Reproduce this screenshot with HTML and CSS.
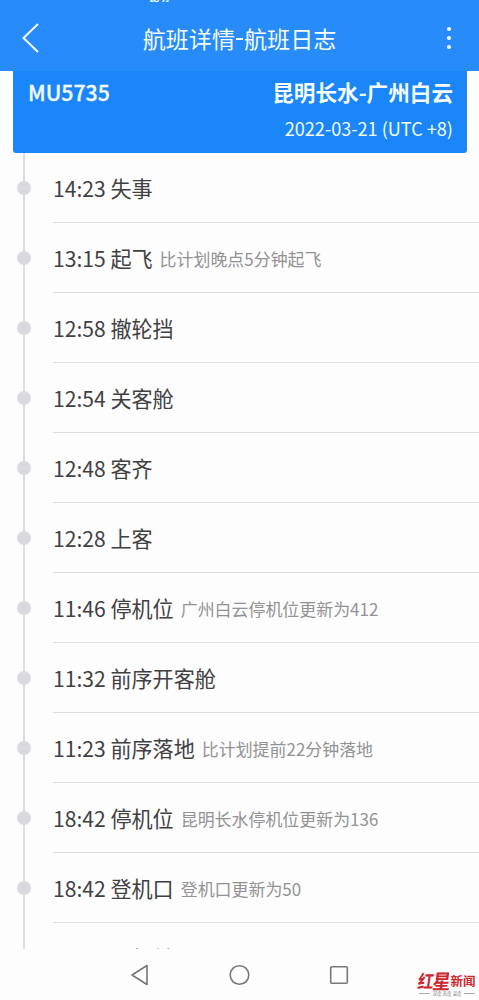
FILE: index.html
```html
<!DOCTYPE html>
<html lang="zh-CN">
<head>
<meta charset="utf-8">
<title>航班详情-航班日志</title>
<link rel="stylesheet" href="styles.css">
</head>
<body>
<div class="screen">
  <header class="bar">
    <span class="status">昆明</span>
    <svg class="back" width="18" height="32" viewBox="0 0 18 32"><path d="M16 2L1.500 16L16 30"/></svg>
    <h1 class="title">航班详情<span class="dash"></span>航班日志</h1>
    <svg class="more" width="6" height="24" viewBox="0 0 6 24"><circle cx="3" cy="3" r="2.100"/><circle cx="3" cy="12" r="2.100"/><circle cx="3" cy="21" r="2.100"/></svg>
  </header>
  <main class="content">
    <section class="flight">
      <div class="route"><span class="number">MU5735</span><span>昆明长水-广州白云</span></div>
      <div class="date">2022-03-21 (UTC +8)</div>
    </section>
    <ol class="log">
      <li><i class="dot"></i><p>14:23 失事</p></li>
      <li><i class="dot"></i><p>13:15 起飞<small>比计划晚点5分钟起飞</small></p></li>
      <li><i class="dot"></i><p>12:58 撤轮挡</p></li>
      <li><i class="dot"></i><p>12:54 关客舱</p></li>
      <li><i class="dot"></i><p>12:48 客齐</p></li>
      <li><i class="dot"></i><p>12:28 上客</p></li>
      <li><i class="dot"></i><p>11:46 停机位<small>广州白云停机位更新为412</small></p></li>
      <li><i class="dot"></i><p>11:32 前序开客舱</p></li>
      <li><i class="dot"></i><p>11:23 前序落地<small>比计划提前22分钟落地</small></p></li>
      <li><i class="dot"></i><p>18:42 停机位<small>昆明长水停机位更新为136</small></p></li>
      <li><i class="dot"></i><p>18:42 登机口<small>登机口更新为50</small></p></li>
      <li class="last"><i class="dot"></i><p>18:42 飞机前号</p></li>
    </ol>
  </main>
  <footer class="nav">
    <svg class="keys" width="220" height="24" viewBox="0 0 220 24"><path d="M17 2.500V21.500L2 12Z"/><circle cx="109.500" cy="12" r="9.300"/><rect x="200.700" y="3.700" width="16.600" height="16.600" rx="1"/></svg>
    <div class="brand">
      <div class="name"><span class="brush">红</span><span class="brush tall">星</span><span class="news">新闻</span></div>
      <div class="tag"><span>深度 态度 温度</span></div>
    </div>
  </footer>
</div>
</body>
</html>
```
FILE: styles.css
```css
* { box-sizing: border-box; margin: 0; padding: 0; }
body { font-family: "Noto Sans CJK SC", sans-serif; background: #fdfdfd; }
.screen { width: 479px; height: 1000px; overflow: hidden; display: flex; flex-direction: column; }
.bar { position: relative; flex: none; height: 71px; background: #278bf9; color: #f4fcff; display: flex; align-items: center; justify-content: space-between; padding: 4px 27px 0 22px; overflow: hidden; }
.status { position: absolute; left: 149px; top: -10px; font-size: 10px; line-height: 14px; font-weight: 700; }
.back { fill: none; stroke: #f4fcff; stroke-width: 2; }
.more { fill: #f4fcff; }
.title { font-size: 23.100px; font-weight: 400; line-height: 34px; display: flex; align-items: center; margin-right: 7px; }
.dash { width: 7px; height: 2px; margin: 2px 1px 0; background: #f4fcff; }
.content { flex: none; height: 878px; overflow: hidden; }
.flight { height: 82px; margin: 0 12px 0 13px; padding: 5px 14px 0 15px; background: #1a86fa; border-radius: 0 0 3px 3px; color: #f4fcff; }
.route { display: flex; justify-content: space-between; font-size: 21.600px; line-height: 32px; font-weight: 700; }
.number { font-weight: 500; font-size: 21.300px; -webkit-text-stroke: 0.300px #f4fcff; }
.date { text-align: right; font-size: 18.100px; line-height: 26px; margin-top: 7px; }
.log { list-style: none; padding-top: 1px; background: linear-gradient(#dddde1, #dddde1) 23px 0 / 2px 100% no-repeat; }
.log li { height: 70px; display: flex; }
.dot { flex: none; width: 14px; height: 14px; margin: 27px 23px 0 17px; border-radius: 50%; background: #d9d9df; }
.log p { flex: 1; height: 69px; padding-top: 18px; line-height: 32px; font-size: 21.100px; color: #404043; border-bottom: 1px solid #dedede; margin-left: -1px; }
.log .last p { padding-top: 18px; }
.log small { position: relative; top: -1px; font-size: 16.950px; color: #929294; margin-left: 7px; }
.nav { flex: 1; display: flex; justify-content: space-between; padding-left: 130px; padding-right: 4px; }
.keys { margin-top: 14px; fill: none; stroke: #77777b; stroke-width: 1.600; stroke-linejoin: round; flex: none; }
.brand { width: 56px; margin-top: 19px; }
.name { display: flex; align-items: center; justify-content: center; height: 23px; color: #cc2630; white-space: nowrap; }
.brush { font-size: 16px; line-height: 22px; font-weight: 700; transform: skewX(-8deg) scaleY(1.120); margin-right: -2px; }
.tall { font-size: 18px; }
.news { font-size: 12.500px; line-height: 20px; font-weight: 700; margin: 3px 0 0 2px; }
.tag { display: flex; align-items: center; justify-content: space-between; height: 5px; font-size: 4.500px; line-height: 5px; color: #858585; white-space: nowrap; }
.tag::before, .tag::after { content: ""; flex: none; width: 11px; height: 1px; background: #aaa; }
```
